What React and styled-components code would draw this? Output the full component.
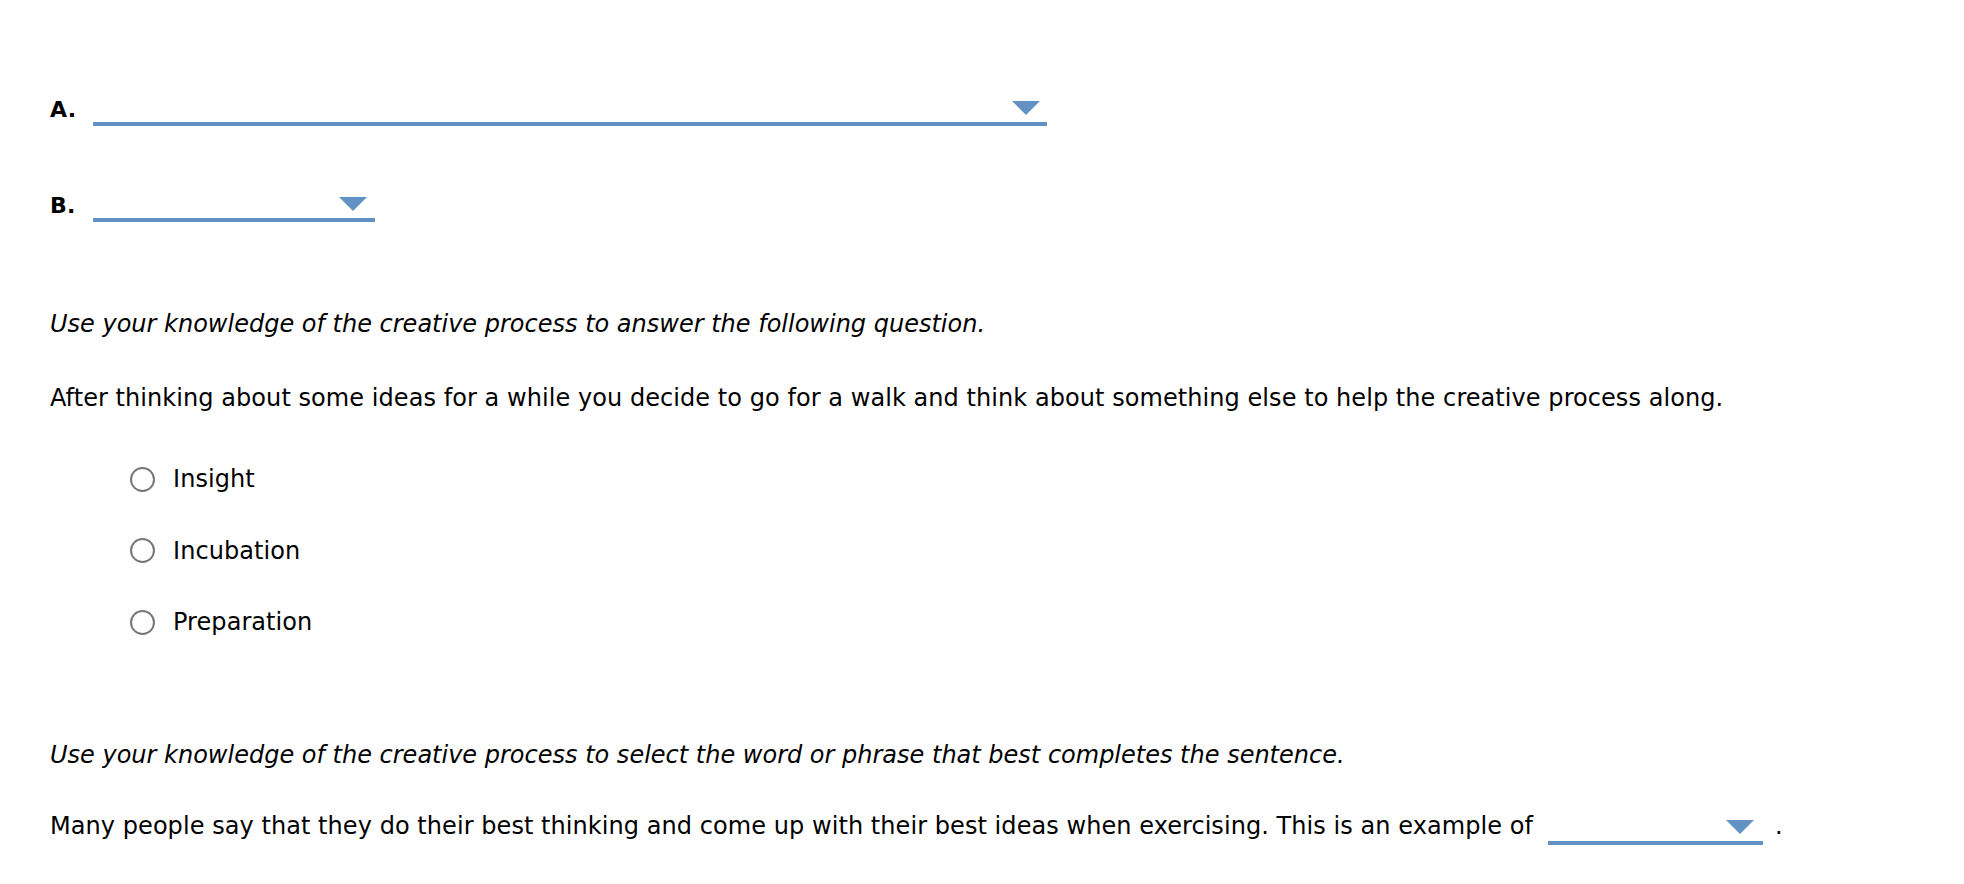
import React from 'react'
import styled, { createGlobalStyle } from 'styled-components'

const GlobalStyle = createGlobalStyle`
  html, body {
    margin: 0;
    padding: 0;
    background: #ffffff;
  }
`;

const Page = styled.div`
  padding: 92px 0 40px 50px;
  font-family: "DejaVu Sans", Verdana, sans-serif;
  font-size: 24px;
  letter-spacing: 0.06px;
  line-height: 28px;
  color: #000000;
`;

const PartRow = styled.div`
  display: flex;
  align-items: flex-end;
  margin-bottom: ${p => p.$gap || 0}px;
`;

const PartLabel = styled.span`
  width: 43px;
  font-family: "DejaVu Sans", Verdana, sans-serif;
  font-weight: bold;
  font-size: 22px;
  letter-spacing: 0.3px;
  line-height: 23px;
  padding-bottom: 5px;
`;

const Select = styled.span`
  display: ${p => (p.$inline ? 'inline-flex' : 'flex')};
  box-sizing: border-box;
  width: ${p => p.$width}px;
  height: ${p => p.$height || 34}px;
  border-bottom: 4px solid #6192c3;
  justify-content: flex-end;
  align-items: flex-end;
  padding: 0 ${p => p.$right || 7}px 7px 0;
  vertical-align: baseline;
  margin: ${p => (p.$inline ? '0 12px -9px 15px' : '0')};
`;

const Caret = styled.span`
  width: 0;
  height: 0;
  border-left: 14px solid transparent;
  border-right: 14px solid transparent;
  border-top: 14px solid #6192c3;
`;

const Instruction = styled.p`
  margin: ${p => p.$top}px 0 0;
  font-style: italic;
  letter-spacing: 0;
`;

const Prompt = styled.p`
  margin: ${p => p.$top}px 0 0;
`;

const Options = styled.div`
  display: flex;
  flex-direction: column;
  gap: 43.5px;
  margin-top: 53px;
  padding-left: 80px;
`;

const Option = styled.label`
  display: flex;
  align-items: center;
  gap: 18px;
`;

const Radio = styled.span`
  box-sizing: border-box;
  width: 25px;
  height: 25px;
  border: 2px solid #777777;
  border-radius: 50%;
  background: #fff;
`;

const Dropdown = ({ width, right, inline, height }) => (
  <Select $width={width} $right={right} $inline={inline} $height={height}>
    <Caret />
  </Select>
)

const options = ['Insight', 'Incubation', 'Preparation']

export default function App() {
  return (
    <Page>
      <GlobalStyle />
      <PartRow $gap={62}>
        <PartLabel>A.</PartLabel>
        <Dropdown width={954} right={7} />
      </PartRow>
      <PartRow>
        <PartLabel>B.</PartLabel>
        <Dropdown width={282} right={8} />
      </PartRow>

      <Instruction $top={88}>
        Use your knowledge of the creative process to answer the following question.
      </Instruction>
      <Prompt $top={46}>
        After thinking about some ideas for a while you decide to go for a walk and think about something else to help the creative process along.
      </Prompt>

      <Options>
        {options.map(opt => (
          <Option key={opt}>
            <Radio />
            <span>{opt}</span>
          </Option>
        ))}
      </Options>

      <Instruction $top={105}>
        Use your knowledge of the creative process to select the word or phrase that best completes the sentence.
      </Instruction>
      <Prompt $top={43}>
        Many people say that they do their best thinking and come up with their best ideas when exercising. This is an example of
        <Dropdown width={215} right={9} height={28} inline />
        .
      </Prompt>
    </Page>
  )
}
